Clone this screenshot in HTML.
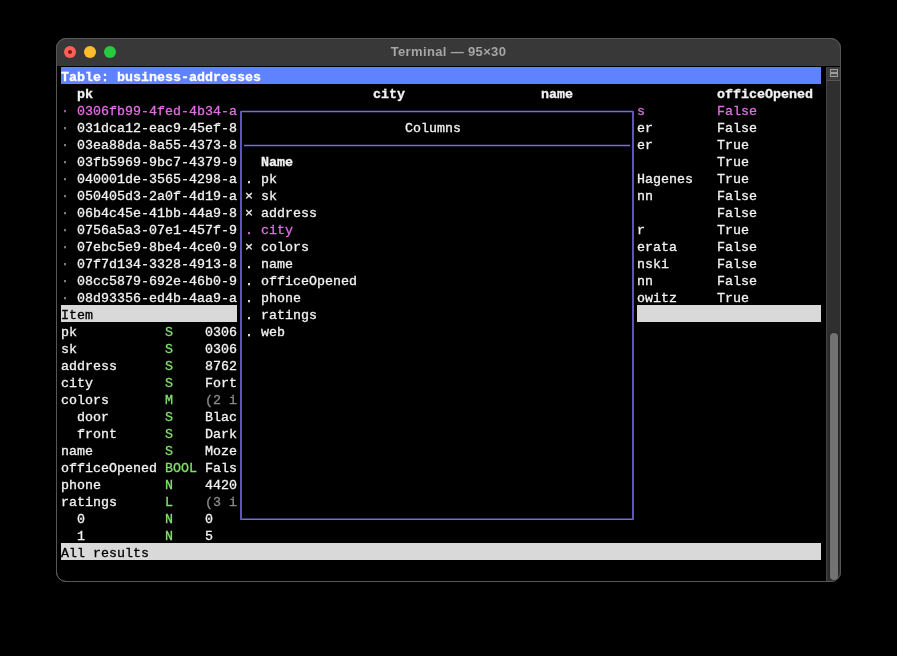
<!DOCTYPE html>
<html><head><meta charset="utf-8"><style>
html,body{margin:0;padding:0;background:#000;width:897px;height:656px;overflow:hidden;}
.win{position:absolute;left:56px;top:38px;width:783px;height:542px;border-radius:10px;background:linear-gradient(#383838 0,#383838 27px,#000 27px);border:1px solid #565656;}
.title{position:absolute;left:57px;top:39px;width:783px;height:27px;background:#383838;border-radius:9px 9px 0 0;}
.ttxt{position:absolute;will-change:transform;left:56px;width:785px;text-align:center;top:43px;font-family:"Liberation Sans",sans-serif;font-weight:bold;font-size:13px;letter-spacing:0.35px;color:#a6a6a6;line-height:18px;}
.dot{position:absolute;width:12px;height:12px;border-radius:50%;top:46px;}
.t{position:absolute;will-change:transform;-webkit-text-stroke:0.3px currentColor;font-family:"Liberation Mono",monospace;font-size:13.333px;line-height:17px;height:17px;white-space:pre;}
.bar{position:absolute;height:17px;}
.ln{position:absolute;background:#5f51c6;}
</style></head><body>
<div class="win"></div>
<div style="position:absolute;left:57px;top:66px;width:783px;height:1px;background:#000;"></div>
<div class="dot" style="left:64px;background:#fe5f57;"></div>
<div style="position:absolute;left:68px;top:50px;width:4px;height:4px;border-radius:50%;background:#8c0c0c;"></div>
<div class="dot" style="left:84px;background:#febc2e;"></div>
<div class="dot" style="left:104px;background:#28c840;"></div>
<div class="ttxt">Terminal — 95×30</div>
<div class="bar" style="left:61px;top:67px;width:760px;background:#5f83ff;"></div>
<div class="bar" style="left:61px;top:305px;width:176px;background:#d9d9d9;"></div>
<div class="bar" style="left:637px;top:305px;width:184px;background:#d9d9d9;"></div>
<div class="bar" style="left:61px;top:543px;width:760px;background:#d9d9d9;"></div>
<svg style="position:absolute;left:0;top:0" width="897" height="656"><g fill="none">
<path d="M241 111.5 H633" stroke="#7668ea" stroke-width="1.4"/>
<path d="M244 145.5 H630" stroke="#7668ea" stroke-width="1.4"/>
<path d="M241 519.3 H633" stroke="#7668ea" stroke-width="1.4"/>
<path d="M241 111 V520" stroke="#5f51c6" stroke-width="2"/>
<path d="M633 111 V520" stroke="#5f51c6" stroke-width="2"/>
</g></svg>
<div style="position:absolute;left:826px;top:67px;width:15px;height:515px;overflow:hidden;border-bottom-right-radius:10px;">
<div style="position:absolute;left:0;top:0;width:1px;height:514px;background:#444;"></div>
<div style="position:absolute;left:1px;top:0;width:13px;height:514px;background:#2f2f2f;"></div>
<div style="position:absolute;left:1px;top:0;width:13px;height:13px;background:#3d3d3d;border-bottom:1px solid #555;"></div>
<div style="position:absolute;left:4px;top:2px;width:6px;height:6px;border:1px solid #9c9c9c;background:#4a4a4a;"></div>
<div style="position:absolute;left:4px;top:5px;width:8px;height:2px;background:#9c9c9c;"></div>
<div style="position:absolute;left:3px;top:265px;width:10px;height:249px;border-radius:5px;background:#262626;"></div>
<div style="position:absolute;left:4px;top:266px;width:8px;height:247px;border-radius:4px;background:#737373;"></div>
</div>
<div style="position:absolute;left:56px;top:38px;width:783px;height:542px;border-radius:10px;border:1px solid #565656;"></div>
<div class="t" style="left:61px;top:69px;color:#ffffff;font-weight:bold;">Table: business-addresses</div>
<div class="t" style="left:77px;top:86px;color:#f2f2f2;font-weight:bold;">pk</div>
<div class="t" style="left:373px;top:86px;color:#f2f2f2;font-weight:bold;">city</div>
<div class="t" style="left:541px;top:86px;color:#f2f2f2;font-weight:bold;">name</div>
<div class="t" style="left:717px;top:86px;color:#f2f2f2;font-weight:bold;">officeOpened</div>
<div class="t" style="left:61px;top:103px;color:#b060b4;">·</div>
<div class="t" style="left:77px;top:103px;color:#e06ce4;">0306fb99-4fed-4b34-a</div>
<div class="t" style="left:637px;top:103px;color:#e06ce4;">s</div>
<div class="t" style="left:717px;top:103px;color:#e06ce4;">False</div>
<div class="t" style="left:61px;top:120px;color:#8c8c8c;">·</div>
<div class="t" style="left:77px;top:120px;color:#f2f2f2;">031dca12-eac9-45ef-8</div>
<div class="t" style="left:637px;top:120px;color:#f2f2f2;">er</div>
<div class="t" style="left:717px;top:120px;color:#f2f2f2;">False</div>
<div class="t" style="left:61px;top:137px;color:#8c8c8c;">·</div>
<div class="t" style="left:77px;top:137px;color:#f2f2f2;">03ea88da-8a55-4373-8</div>
<div class="t" style="left:637px;top:137px;color:#f2f2f2;">er</div>
<div class="t" style="left:717px;top:137px;color:#f2f2f2;">True</div>
<div class="t" style="left:61px;top:154px;color:#8c8c8c;">·</div>
<div class="t" style="left:77px;top:154px;color:#f2f2f2;">03fb5969-9bc7-4379-9</div>
<div class="t" style="left:717px;top:154px;color:#f2f2f2;">True</div>
<div class="t" style="left:61px;top:171px;color:#8c8c8c;">·</div>
<div class="t" style="left:77px;top:171px;color:#f2f2f2;">040001de-3565-4298-a</div>
<div class="t" style="left:637px;top:171px;color:#f2f2f2;">Hagenes</div>
<div class="t" style="left:717px;top:171px;color:#f2f2f2;">True</div>
<div class="t" style="left:61px;top:188px;color:#8c8c8c;">·</div>
<div class="t" style="left:77px;top:188px;color:#f2f2f2;">050405d3-2a0f-4d19-a</div>
<div class="t" style="left:637px;top:188px;color:#f2f2f2;">nn</div>
<div class="t" style="left:717px;top:188px;color:#f2f2f2;">False</div>
<div class="t" style="left:61px;top:205px;color:#8c8c8c;">·</div>
<div class="t" style="left:77px;top:205px;color:#f2f2f2;">06b4c45e-41bb-44a9-8</div>
<div class="t" style="left:717px;top:205px;color:#f2f2f2;">False</div>
<div class="t" style="left:61px;top:222px;color:#8c8c8c;">·</div>
<div class="t" style="left:77px;top:222px;color:#f2f2f2;">0756a5a3-07e1-457f-9</div>
<div class="t" style="left:637px;top:222px;color:#f2f2f2;">r</div>
<div class="t" style="left:717px;top:222px;color:#f2f2f2;">True</div>
<div class="t" style="left:61px;top:239px;color:#8c8c8c;">·</div>
<div class="t" style="left:77px;top:239px;color:#f2f2f2;">07ebc5e9-8be4-4ce0-9</div>
<div class="t" style="left:637px;top:239px;color:#f2f2f2;">erata</div>
<div class="t" style="left:717px;top:239px;color:#f2f2f2;">False</div>
<div class="t" style="left:61px;top:256px;color:#8c8c8c;">·</div>
<div class="t" style="left:77px;top:256px;color:#f2f2f2;">07f7d134-3328-4913-8</div>
<div class="t" style="left:637px;top:256px;color:#f2f2f2;">nski</div>
<div class="t" style="left:717px;top:256px;color:#f2f2f2;">False</div>
<div class="t" style="left:61px;top:273px;color:#8c8c8c;">·</div>
<div class="t" style="left:77px;top:273px;color:#f2f2f2;">08cc5879-692e-46b0-9</div>
<div class="t" style="left:637px;top:273px;color:#f2f2f2;">nn</div>
<div class="t" style="left:717px;top:273px;color:#f2f2f2;">False</div>
<div class="t" style="left:61px;top:290px;color:#8c8c8c;">·</div>
<div class="t" style="left:77px;top:290px;color:#f2f2f2;">08d93356-ed4b-4aa9-a</div>
<div class="t" style="left:637px;top:290px;color:#f2f2f2;">owitz</div>
<div class="t" style="left:717px;top:290px;color:#f2f2f2;">True</div>
<div class="t" style="left:61px;top:307px;color:#000000;">Item</div>
<div class="t" style="left:61px;top:324px;color:#f2f2f2;">pk</div>
<div class="t" style="left:165px;top:324px;color:#82e06c;">S</div>
<div class="t" style="left:205px;top:324px;color:#f2f2f2;">0306</div>
<div class="t" style="left:61px;top:341px;color:#f2f2f2;">sk</div>
<div class="t" style="left:165px;top:341px;color:#82e06c;">S</div>
<div class="t" style="left:205px;top:341px;color:#f2f2f2;">0306</div>
<div class="t" style="left:61px;top:358px;color:#f2f2f2;">address</div>
<div class="t" style="left:165px;top:358px;color:#82e06c;">S</div>
<div class="t" style="left:205px;top:358px;color:#f2f2f2;">8762</div>
<div class="t" style="left:61px;top:375px;color:#f2f2f2;">city</div>
<div class="t" style="left:165px;top:375px;color:#82e06c;">S</div>
<div class="t" style="left:205px;top:375px;color:#f2f2f2;">Fort</div>
<div class="t" style="left:61px;top:392px;color:#f2f2f2;">colors</div>
<div class="t" style="left:165px;top:392px;color:#82e06c;">M</div>
<div class="t" style="left:205px;top:392px;color:#8a8a8a;">(2 i</div>
<div class="t" style="left:61px;top:409px;color:#f2f2f2;">  door</div>
<div class="t" style="left:165px;top:409px;color:#82e06c;">S</div>
<div class="t" style="left:205px;top:409px;color:#f2f2f2;">Blac</div>
<div class="t" style="left:61px;top:426px;color:#f2f2f2;">  front</div>
<div class="t" style="left:165px;top:426px;color:#82e06c;">S</div>
<div class="t" style="left:205px;top:426px;color:#f2f2f2;">Dark</div>
<div class="t" style="left:61px;top:443px;color:#f2f2f2;">name</div>
<div class="t" style="left:165px;top:443px;color:#82e06c;">S</div>
<div class="t" style="left:205px;top:443px;color:#f2f2f2;">Moze</div>
<div class="t" style="left:61px;top:460px;color:#f2f2f2;">officeOpened</div>
<div class="t" style="left:165px;top:460px;color:#82e06c;">BOOL</div>
<div class="t" style="left:205px;top:460px;color:#f2f2f2;">Fals</div>
<div class="t" style="left:61px;top:477px;color:#f2f2f2;">phone</div>
<div class="t" style="left:165px;top:477px;color:#82e06c;">N</div>
<div class="t" style="left:205px;top:477px;color:#f2f2f2;">4420</div>
<div class="t" style="left:61px;top:494px;color:#f2f2f2;">ratings</div>
<div class="t" style="left:165px;top:494px;color:#82e06c;">L</div>
<div class="t" style="left:205px;top:494px;color:#8a8a8a;">(3 i</div>
<div class="t" style="left:61px;top:511px;color:#f2f2f2;">  0</div>
<div class="t" style="left:165px;top:511px;color:#82e06c;">N</div>
<div class="t" style="left:205px;top:511px;color:#f2f2f2;">0</div>
<div class="t" style="left:61px;top:528px;color:#f2f2f2;">  1</div>
<div class="t" style="left:165px;top:528px;color:#82e06c;">N</div>
<div class="t" style="left:205px;top:528px;color:#f2f2f2;">5</div>
<div class="t" style="left:61px;top:545px;color:#000000;">All results</div>
<div class="t" style="left:405px;top:120px;color:#f2f2f2;">Columns</div>
<div class="t" style="left:261px;top:154px;color:#f2f2f2;font-weight:bold;">Name</div>
<div class="t" style="left:245px;top:171px;color:#f2f2f2;">.</div>
<div class="t" style="left:261px;top:171px;color:#f2f2f2;">pk</div>
<div class="t" style="left:245px;top:188px;color:#f2f2f2;">×</div>
<div class="t" style="left:261px;top:188px;color:#f2f2f2;">sk</div>
<div class="t" style="left:245px;top:205px;color:#f2f2f2;">×</div>
<div class="t" style="left:261px;top:205px;color:#f2f2f2;">address</div>
<div class="t" style="left:245px;top:222px;color:#e06ce4;">.</div>
<div class="t" style="left:261px;top:222px;color:#e06ce4;">city</div>
<div class="t" style="left:245px;top:239px;color:#f2f2f2;">×</div>
<div class="t" style="left:261px;top:239px;color:#f2f2f2;">colors</div>
<div class="t" style="left:245px;top:256px;color:#f2f2f2;">.</div>
<div class="t" style="left:261px;top:256px;color:#f2f2f2;">name</div>
<div class="t" style="left:245px;top:273px;color:#f2f2f2;">.</div>
<div class="t" style="left:261px;top:273px;color:#f2f2f2;">officeOpened</div>
<div class="t" style="left:245px;top:290px;color:#f2f2f2;">.</div>
<div class="t" style="left:261px;top:290px;color:#f2f2f2;">phone</div>
<div class="t" style="left:245px;top:307px;color:#f2f2f2;">.</div>
<div class="t" style="left:261px;top:307px;color:#f2f2f2;">ratings</div>
<div class="t" style="left:245px;top:324px;color:#f2f2f2;">.</div>
<div class="t" style="left:261px;top:324px;color:#f2f2f2;">web</div>
</body></html>
